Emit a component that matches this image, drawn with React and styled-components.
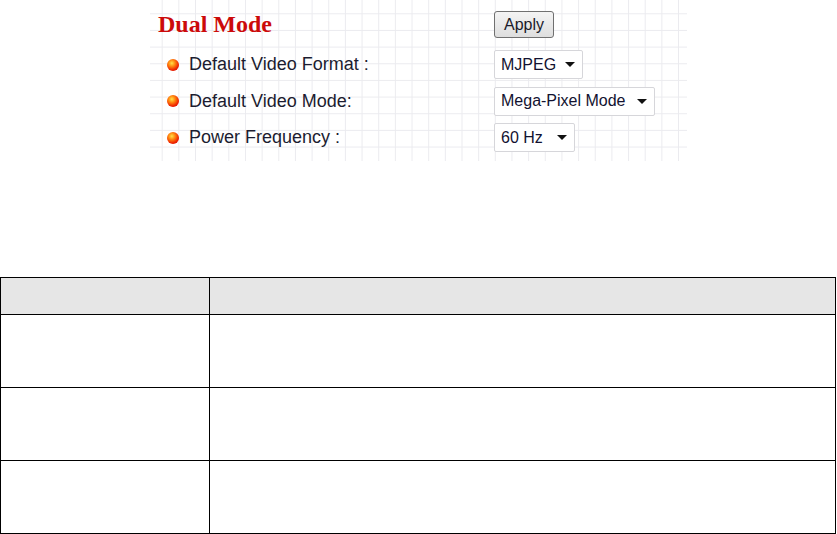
import React from 'react';
import styled, { createGlobalStyle } from 'styled-components';

const GlobalStyle = createGlobalStyle`
    body {
        margin: 0;
        background: #fff;
        font-family: "Liberation Sans", Arial, sans-serif;
    }
`

const Page = styled.div`
    width: 837px;
    height: 534px;
    overflow: hidden;
`

const Panel = styled.div`
    margin-left: 150px;
    width: 537px;
    height: 161px;
    box-sizing: border-box;
    padding-top: 11px;
    background-color: #fff;
    background-image:
        linear-gradient(to right, #ebebef 1px, transparent 1px),
        linear-gradient(to bottom, #ebebef 1px, transparent 1px);
    background-size: 16.67px 16.67px;
    background-position: 11.7px 13.3px;
`

const HeadRow = styled.div`
    display: flex;
    align-items: center;
    height: 27px;
`

const Title = styled.h2`
    width: 336px;
    margin: 0 0 0 8px;
    font-family: "Liberation Serif", "Times New Roman", serif;
    font-size: 24px;
    font-weight: bold;
    color: #cc0a0a;
    line-height: 27px;
`

const ApplyButton = styled.button`
    width: 60px;
    height: 27px;
    padding: 0;
    border: 1px solid #707070;
    border-radius: 3px;
    background: linear-gradient(to bottom, #f4f4f4, #dedede);
    font-family: "Liberation Sans", Arial, sans-serif;
    font-size: 16px;
    color: #1a1a2a;
`

const Rows = styled.div`
    display: flex;
    flex-direction: column;
    gap: 7.5px;
    margin-top: 12px;
`

const Row = styled.div`
    display: flex;
    align-items: center;
    height: 29px;
`

const Label = styled.div`
    display: flex;
    align-items: center;
    width: 344px;
    box-sizing: border-box;
    padding-left: 17px;
    font-size: 18px;
    color: #1c1c30;
`

const Bullet = styled.span`
    width: 12px;
    height: 12px;
    margin-right: 10px;
    border-radius: 50%;
    background: radial-gradient(circle at 40% 35%, #ffe04a 0%, #ff8a10 30%, #ee2200 65%, #c00000 100%);
`

const Select = styled.div`
    display: flex;
    align-items: center;
    width: ${props => props.width}px;
    height: 29px;
    box-sizing: border-box;
    padding: 0 7px 0 6px;
    border: 1px solid #d6d6da;
    border-radius: 2px;
    background: #fff;
    font-size: 16px;
    color: #121230;
`

const Arrow = styled.span`
    margin-left: auto;
    width: 0;
    height: 0;
    border-left: 5px solid transparent;
    border-right: 5px solid transparent;
    border-top: 5px solid #111;
`

const Table = styled.table`
    margin-top: 116px;
    width: 836px;
    border-collapse: collapse;

    th, td {
        border: 1px solid #000;
        padding: 0;
    }

    th {
        height: 36px;
        background: #e6e6e6;
    }

    td {
        height: 72px;
    }

    .first {
        width: 208px;
    }
`

const fields = [
    { label: 'Default Video Format :', value: 'MJPEG', width: 89 },
    { label: 'Default Video Mode:', value: 'Mega-Pixel Mode', width: 161 },
    { label: 'Power Frequency :', value: '60 Hz', width: 81 },
];

const App = () => {
    return (
        <Page>
            <GlobalStyle />
            <Panel>
                <HeadRow>
                    <Title>Dual Mode</Title>
                    <ApplyButton>Apply</ApplyButton>
                </HeadRow>
                <Rows>
                    {fields.map(f => (
                        <Row key={f.label}>
                            <Label><Bullet />{f.label}</Label>
                            <Select width={f.width}>{f.value}<Arrow /></Select>
                        </Row>
                    ))}
                </Rows>
            </Panel>
            <Table>
                <thead>
                    <tr><th className='first'></th><th></th></tr>
                </thead>
                <tbody>
                    <tr><td className='first'></td><td></td></tr>
                    <tr><td className='first'></td><td></td></tr>
                    <tr><td className='first'></td><td></td></tr>
                </tbody>
            </Table>
        </Page>
    );
};

export default App
